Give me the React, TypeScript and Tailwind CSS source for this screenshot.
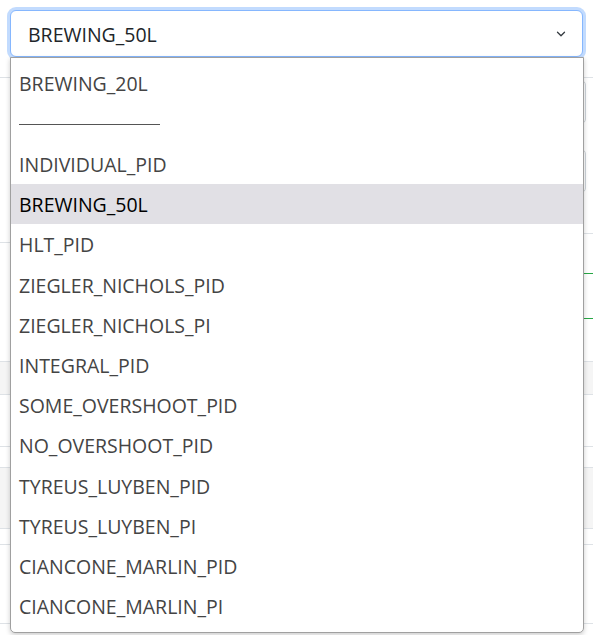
import { ChevronDown } from "lucide-react";

const profiles = [
  "BREWING_20L",
  "---",
  "INDIVIDUAL_PID",
  "BREWING_50L",
  "HLT_PID",
  "ZIEGLER_NICHOLS_PID",
  "ZIEGLER_NICHOLS_PI",
  "INTEGRAL_PID",
  "SOME_OVERSHOOT_PID",
  "NO_OVERSHOOT_PID",
  "TYREUS_LUYBEN_PID",
  "TYREUS_LUYBEN_PI",
  "CIANCONE_MARLIN_PID",
  "CIANCONE_MARLIN_PI",
];

const selected = "BREWING_50L";

const App = () => {
  return (
    <div className="relative w-[593px] h-[635px] overflow-hidden bg-white font-['Open_Sans',sans-serif]">
      {/* select */}
      <div className="px-[10px] pt-[10px]">
        <div className="flex items-center justify-between h-[47px] pl-[17px] pr-[14px] rounded-[6px] border border-[#86b7fe] shadow-[0_0_0_3px_rgba(13,110,253,0.25)] bg-white">
          <span className="text-[19.5px] text-[#212529] leading-none mt-[2px]">{selected}</span>
          <ChevronDown size={14} strokeWidth={2.2} className="text-[#343a40] mt-[1px]" />
        </div>
      </div>

      {/* page behind the open list */}
      <div className="h-[21px] border-b border-[#dee2e6]" />
      <div className="flex">
        <div className="w-1/2">
          <div className="h-[165px] border-b border-[#dee2e6]" />
          <div className="h-[98px]" />
        </div>
        <div className="w-1/2">
          <div className="h-[156px] border-b border-[#dee2e6] pt-[2px] flex flex-col gap-[25px] items-end pr-[7px]">
            <div className="w-[200px] h-[44px] rounded-[5px] border border-[#ced4da]" />
            <div className="w-[200px] h-[44px] rounded-[5px] border border-[#ced4da]" />
          </div>
          <div className="h-[40px] border-b border-[#28a745]" />
          <div className="h-[45px] border-b border-[#28a745]" />
        </div>
      </div>
      <div className="h-[21px] border-b border-[#dee2e6]" />
      <div className="h-[33px] bg-[#f5f5f5] border-b border-[#dee2e6]" />
      <div className="h-[52px] border-b border-[#dee2e6]" />
      <div className="h-[21px] border-b border-[#dee2e6]" />
      <div className="h-[61px] bg-[#f5f5f5] border-b border-[#dee2e6]" />
      <div className="h-[16px] border-b border-[#dee2e6]" />
      <div className="h-[79px] border-b border-[#dee2e6]" />
      <div className="h-[18px] border-b border-[#dee2e6]" />

      {/* open option list */}
      <div className="absolute left-[10px] top-[57px] w-[574px] h-[576px] pt-[5px] bg-white border border-[#a0a0a0] rounded-b-[5px] shadow-[0_2px_5px_rgba(0,0,0,0.2)]">
        {profiles.map((name, i) =>
          name === "---" ? (
            <div key={i} className="h-[40.23px] flex items-center pl-[8px] pt-[2px]">
              <div className="w-[141px] h-[1px] bg-[#555]" />
            </div>
          ) : (
            <div
              key={i}
              className={
                name === selected
                  ? "h-[40.23px] flex items-center pl-[8px] pt-[2px] bg-[#e1e0e5] text-[19.5px] text-black"
                  : "h-[40.23px] flex items-center pl-[8px] pt-[2px] text-[19.5px] text-[#444]"
              }
            >
              {name}
            </div>
          )
        )}
      </div>
    </div>
  );
};

export default App;
